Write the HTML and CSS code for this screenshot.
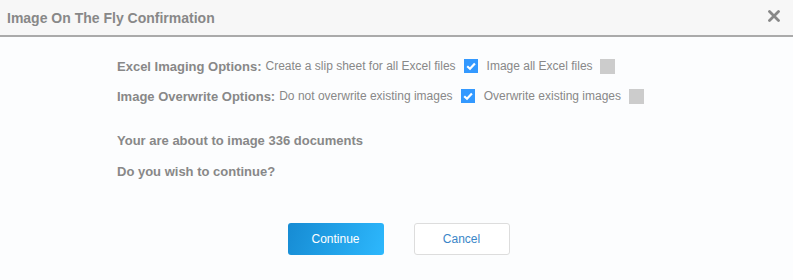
FILE: index.html
```html
<!DOCTYPE html>
<html lang="en">
  <head>
    <meta charset="UTF-8" />
    <meta name="viewport" content="width=device-width, initial-scale=1.0" />
    <title>Image On The Fly Confirmation</title>
    <link rel="stylesheet" href="styles.css">
  </head>
  <body>
    <div class="dialog">
      <div class="header">
        <span class="title">Image On The Fly Confirmation</span>
        <span class="close"><svg viewBox="0 0 12 12" width="12" height="12"><path d="M1.5 1.5 L10.5 10.5 M10.5 1.5 L1.5 10.5" stroke="#888" stroke-width="2.8" stroke-linecap="round"/></svg></span>
      </div>

      <div class="content">
        <div class="option-row">
          <b>Excel Imaging Options:</b>
          <span class="opt">Create a slip sheet for all Excel files</span>
          <span class="check on"><svg viewBox="0 0 14 14" width="14" height="14"><path d="M3.2 7.2 L6 9.8 L10.9 4.4" fill="none" stroke="#fff" stroke-width="2.2"/></svg></span>
          <span class="opt">Image all Excel files</span>
          <span class="check off"></span>
        </div>
        <div class="option-row">
          <b>Image Overwrite Options:</b>
          <span class="opt">Do not overwrite existing images</span>
          <span class="check on"><svg viewBox="0 0 14 14" width="14" height="14"><path d="M3.2 7.2 L6 9.8 L10.9 4.4" fill="none" stroke="#fff" stroke-width="2.2"/></svg></span>
          <span class="opt">Overwrite existing images</span>
          <span class="check off wide"></span>
        </div>

        <p class="msg first">Your are about to image 336 documents</p>
        <p class="msg">Do you wish to continue?</p>
      </div>

      <div class="footer">
        <button class="btn primary">Continue</button>
        <button class="btn">Cancel</button>
      </div>
    </div>
  </body>
</html>
```

FILE: styles.css
```css
body {
  margin: 0;
  padding: 0;
  font-family: "Liberation Sans", Arial, sans-serif;
  background-color: #fcfdfe;
  color: #888888;
}
.dialog {
  width: 793px;
  height: 280px;
}
.header {
  display: flex;
  align-items: center;
  justify-content: space-between;
  height: 35px;
  padding: 0 13px 0 7px;
  background-color: #f7f7f7;
  border-bottom: 2px solid #aaaaaa;
}
.title {
  font-size: 14px;
  font-weight: bold;
  color: #888888;
}
.close svg {
  display: block;
  margin-bottom: 3px;
}
.content {
  padding: 14px 0 0 117px;
  font-size: 13px;
}
.option-row {
  display: flex;
  align-items: center;
  height: 30px;
}
.option-row b {
  margin-right: 4px;
}
.opt {
  font-size: 12px;
}
.check {
  display: inline-block;
  width: 14px;
  height: 14px;
  margin: 0 9px 0 8px;
}
.check svg {
  display: block;
}
.check.on {
  background-color: #3399ff;
}
.check.off {
  width: 15px;
  height: 15px;
  margin-left: 7px;
  background-color: #cccccc;
}
.check.off.wide {
  margin-left: 8px;
}
.msg {
  margin: 0;
  font-weight: bold;
  height: 31px;
  line-height: 31px;
}
.msg.first {
  margin-top: 14px;
}
.footer {
  display: flex;
  justify-content: center;
  gap: 30px;
  padding-top: 36px;
  padding-left: 4px;
}
.btn {
  width: 96px;
  height: 32px;
  font-family: "Liberation Sans", Arial, sans-serif;
  font-size: 12px;
  border: 1px solid #dddddd;
  border-radius: 3px;
  background-color: #ffffff;
  color: #3a86c8;
}
.btn.primary {
  border: none;
  background: linear-gradient(110deg, #168bd3, #2db8fd);
  color: #ffffff;
}
```
